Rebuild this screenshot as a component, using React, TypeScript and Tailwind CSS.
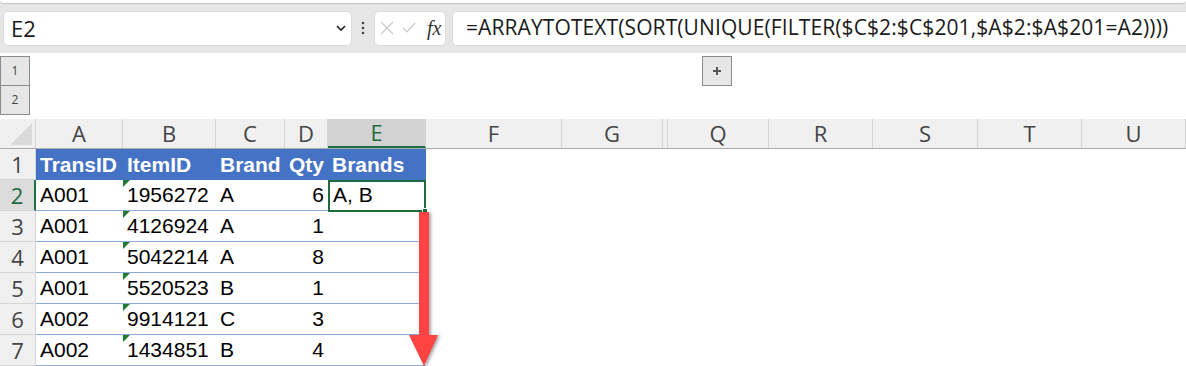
import React from 'react';

const cellFont = { fontFamily: '"Liberation Sans", Arial, sans-serif' };
const uiFont = { fontFamily: '"Open Sans", "Noto Sans", sans-serif' };

const columns = [
  { id: 'A', w: 'w-[87px]' },
  { id: 'B', w: 'w-[93px]' },
  { id: 'C', w: 'w-[69px]' },
  { id: 'D', w: 'w-[43px]' },
  { id: 'E', w: 'w-[98px]', selected: true },
  { id: 'F', w: 'w-[136px]' },
  { id: 'G', w: 'w-[101px]' },
  { id: 'Q', w: 'w-[101px]', hiddenBefore: true },
  { id: 'R', w: 'w-[104px]' },
  { id: 'S', w: 'w-[105px]' },
  { id: 'T', w: 'w-[104px]' },
  { id: 'U', w: 'flex-1' },
];

const rows = [
  ['A001', '1956272', 'A', '6'],
  ['A001', '4126924', 'A', '1'],
  ['A001', '5042214', 'A', '8'],
  ['A001', '5520523', 'B', '1'],
  ['A002', '9914121', 'C', '3'],
  ['A002', '1434851', 'B', '4'],
];

const FormulaBar = () => (
  <div className="h-[53px] bg-[#e6e6e6] flex items-center pl-[3px] gap-0 relative">
    <div className="absolute top-0 left-0 right-0 h-[3px] bg-white rounded-b shadow-[0_1px_1px_rgba(0,0,0,0.15)]" />
    <div className="w-[349px] h-[35px] bg-white rounded-[5px] border border-[#dcdcdc] flex items-center justify-between pl-[7px] pr-[3px] mt-[3px]">
      <span className="text-[22px] text-[#1b1b1b]" style={uiFont}>E2</span>
      <svg width="14" height="14" viewBox="0 0 14 14">
        <path d="M3 5 L7 9 L11 5" stroke="#222" strokeWidth="1.6" fill="none" />
      </svg>
    </div>
    <div className="w-[22px] flex justify-center mt-[3px]">
      <svg width="4" height="14" viewBox="0 0 4 14">
        <circle cx="2" cy="2" r="1.3" fill="#444" />
        <circle cx="2" cy="7" r="1.3" fill="#444" />
        <circle cx="2" cy="12" r="1.3" fill="#444" />
      </svg>
    </div>
    <div className="w-[72px] h-[35px] bg-white rounded-[5px] border border-[#dcdcdc] flex items-center pl-[5px] gap-[8px] mt-[3px]">
      <svg width="14" height="14" viewBox="0 0 14 14">
        <path d="M1 1 L13 13 M13 1 L1 13" stroke="#c8c8c8" strokeWidth="1.2" />
      </svg>
      <svg width="14" height="12" viewBox="0 0 14 12">
        <path d="M1 6 L5 10 L13 1" stroke="#c8c8c8" strokeWidth="1.2" fill="none" />
      </svg>
      <span className="italic text-[20px] text-[#333] ml-[3px] leading-none" style={{ fontFamily: '"Liberation Serif", serif' }}>
        fx
      </span>
    </div>
    <div className="flex-1 h-[35px] bg-white rounded-l-[5px] border border-r-0 border-[#dcdcdc] ml-[6px] flex items-center pl-[13px] mt-[3px]">
      <span className="text-[21px] text-[#1b1b1b] tracking-[0.1px]" style={uiFont}>
        =ARRAYTOTEXT(SORT(UNIQUE(FILTER($C$2:$C$201,$A$2:$A$201=A2))))
      </span>
    </div>
  </div>
);

const OutlineArea = () => (
  <div className="h-[66px] bg-white flex pt-[3px]">
    <div className="w-[30px] flex flex-col">
      {['1', '2'].map((n) => (
        <div
          key={n}
          className="h-[30px] bg-[#e6e6e6] border border-[#8c8c8c] -mt-[1px] first:mt-0 flex items-center justify-center text-[12px] text-[#444]"
          style={uiFont}
        >
          {n}
        </div>
      ))}
    </div>
    <div className="w-[672px]" />
    <div className="w-[30px] h-[30px] bg-[#e6e6e6] border border-[#8c8c8c] flex items-center justify-center">
      <svg width="10" height="10" viewBox="0 0 10 10">
        <path d="M5 1 V9 M1 5 H9" stroke="#555" strokeWidth="2" />
      </svg>
    </div>
  </div>
);

const HeaderRow = () => (
  <div className="h-[30px] flex bg-[#f0f0f0] border-b border-[#ababab]" style={uiFont}>
    <div className="w-[36px] relative border-r border-[#d4d4d4]">
      <svg className="absolute right-[3px] bottom-[3px]" width="22" height="22" viewBox="0 0 22 22">
        <path d="M22 0 L22 22 L0 22 Z" fill="#dadada" />
      </svg>
    </div>
    {columns.map((c) => (
      <React.Fragment key={c.id}>
        {c.hiddenBefore && <div className="w-[5px] border-r border-[#d4d4d4]" />}
        <div
          className={`${c.w} flex items-center justify-center text-[22px] border-r border-[#d4d4d4] ${
            c.selected ? 'bg-[#d2d2d2] text-[#1e6b3d] border-b-2 border-b-[#1e7145]' : 'text-[#444]'
          }`}
        >
          {c.id}
        </div>
      </React.Fragment>
    ))}
  </div>
);

const GreenTick = () => (
  <svg className="absolute left-0 top-0" width="7" height="7" viewBox="0 0 7 7">
    <path d="M0 0 H7 L0 7 Z" fill="#1e7a2e" />
  </svg>
);

const RowHead = ({ n, selected }: { n: number; selected?: boolean }) => (
  <div
    className={`w-[36px] h-full flex items-center justify-center text-[22px] border-b border-[#d4d4d4] ${
      selected ? 'bg-[#dcdcdc] text-[#1e6b3d] border-r-2 border-r-[#1e7145]' : 'bg-[#f0f0f0] text-[#444] border-r border-r-[#d4d4d4]'
    }`}
    style={uiFont}
  >
    {n}
  </div>
);

const Grid = () => (
  <div className="flex flex-col">
    <HeaderRow />
    <div className="h-[31px] flex" style={cellFont}>
      <RowHead n={1} />
      <div className="w-[390px] flex bg-[#4472c4] text-white font-bold text-[21px] items-center">
        <div className="w-[87px] pl-[4px]">TransID</div>
        <div className="w-[93px] pl-[4px]">ItemID</div>
        <div className="w-[69px] pl-[4px]">Brand</div>
        <div className="w-[43px] pl-[4px]">Qty</div>
        <div className="w-[98px] pl-[4px]">Brands</div>
      </div>
    </div>
    {rows.map((r, i) => (
      <div key={i} className="h-[31px] flex" style={cellFont}>
        <RowHead n={i + 2} selected={i === 0} />
        <div className="w-[390px] flex border-b border-[#8eaadb] text-[21px] text-black items-center relative">
          <div className="w-[87px] pl-[4px]">{r[0]}</div>
          <div className="w-[93px] pl-[4px] relative h-full flex items-center">
            <GreenTick />
            {r[1]}
          </div>
          <div className="w-[69px] pl-[4px]">{r[2]}</div>
          <div className="w-[43px] pr-[4px] text-right">{r[3]}</div>
          <div className="w-[98px] pl-[5px]">{i === 0 ? 'A, B' : ''}</div>
          {i === 0 && (
            <div className="absolute left-[292px] top-0 w-[98px] h-[32px] border-2 border-[#1e6b3d]">
              <div className="absolute -right-[4px] -bottom-[4px] w-[6px] h-[6px] bg-[#1e6b3d] border border-white" />
            </div>
          )}
        </div>
      </div>
    ))}
  </div>
);

const DownArrow = () => (
  <svg
    className="absolute left-[407px] top-[212px]"
    width="34"
    height="156"
    viewBox="0 0 34 156"
    style={{ filter: 'drop-shadow(2px 1px 1.5px rgba(0,0,0,0.35))' }}
  >
    <path d="M12 0 H22 V123 H31 L17 154 L2 123 H12 Z" fill="#ff4343" />
  </svg>
);

export default function App() {
  return (
    <div className="w-[1186px] h-[366px] overflow-hidden bg-white relative">
      <FormulaBar />
      <OutlineArea />
      <Grid />
      <DownArrow />
    </div>
  );
}
